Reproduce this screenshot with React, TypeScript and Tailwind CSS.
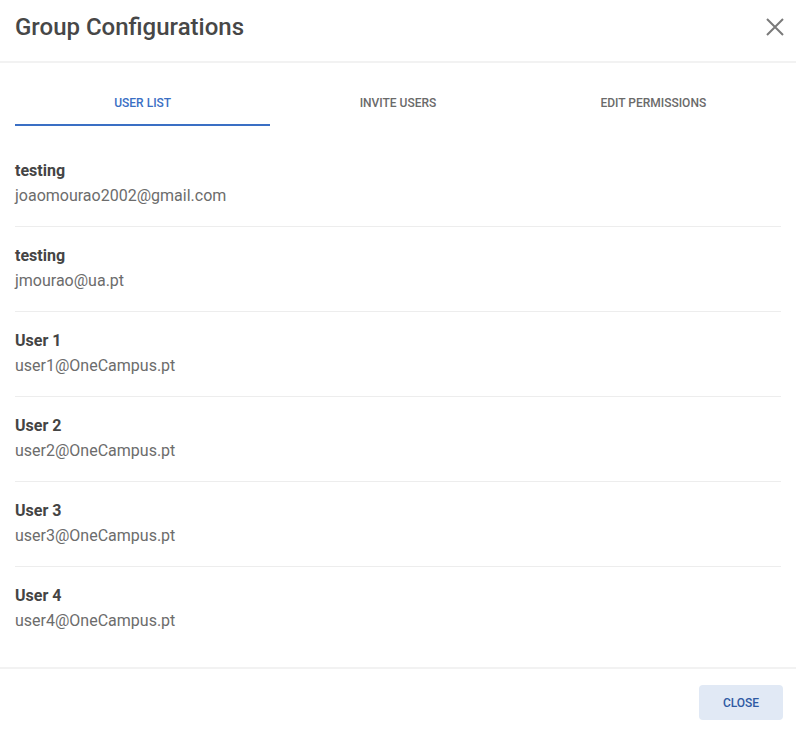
const users = [
  { name: 'testing', email: 'joaomourao2002@gmail.com' },
  { name: 'testing', email: 'jmourao@ua.pt' },
  { name: 'User 1', email: 'user1@OneCampus.pt' },
  { name: 'User 2', email: 'user2@OneCampus.pt' },
  { name: 'User 3', email: 'user3@OneCampus.pt' },
  { name: 'User 4', email: 'user4@OneCampus.pt' },
];

const tabs = ['User List', 'Invite Users', 'Edit Permissions'];

export default function App() {
  return (
    <div className="h-[732px] w-[796px] bg-white font-['Roboto',sans-serif]">
      <div className="flex h-[63px] items-center justify-between border-b-2 border-[#f2f2f2] pb-[7px] pl-[15px] pr-[12px]">
        <h2 className="text-[24px] font-medium text-[#474747]">Group Configurations</h2>
        <button className="flex h-[18px] w-[18px] items-center justify-center">
          <svg width="18" height="18" viewBox="0 0 18 18" fill="none" stroke="#7a7a7a" strokeWidth="2">
            <path d="M1 1L17 17M17 1L1 17" />
          </svg>
        </button>
      </div>

      <div className="px-[15px]">
        <div className="mt-[15px] grid grid-cols-3">
          {tabs.map((tab, i) => (
            <div
              key={tab}
              className={
                i === 0
                  ? 'flex h-[48px] items-center justify-center border-b-2 border-[#3a6fc4] pt-[3px] text-[12px] font-medium uppercase text-[#3a6fc4]'
                  : 'flex h-[48px] items-center justify-center border-b-2 border-transparent pt-[3px] text-[12px] font-medium uppercase text-[#6a6a6a]'
              }
            >
              {tab}
            </div>
          ))}
        </div>

        <div className="mt-[16px]">
          {users.map((u, i) => (
            <div
              key={u.email}
              className={
                i === users.length - 1
                  ? 'pb-[17px] pt-[17px]'
                  : 'border-b border-[#ededed] pb-[17px] pt-[17px]'
              }
            >
              <div className="text-[16px] font-bold leading-[24px] text-[#444]">{u.name}</div>
              <div className="text-[16px] leading-[26px] text-[#6c6c6c]">{u.email}</div>
            </div>
          ))}
        </div>
      </div>

      <div className="mt-[16px] flex justify-end border-t-2 border-[#f2f2f2] pr-[13px] pt-[16px]">
        <button className="h-[35px] w-[84px] rounded-[4px] bg-[#e1e9f5] pt-[1px] text-[12px] font-medium uppercase text-[#2f5aa3]">
          Close
        </button>
      </div>
    </div>
  );
}
